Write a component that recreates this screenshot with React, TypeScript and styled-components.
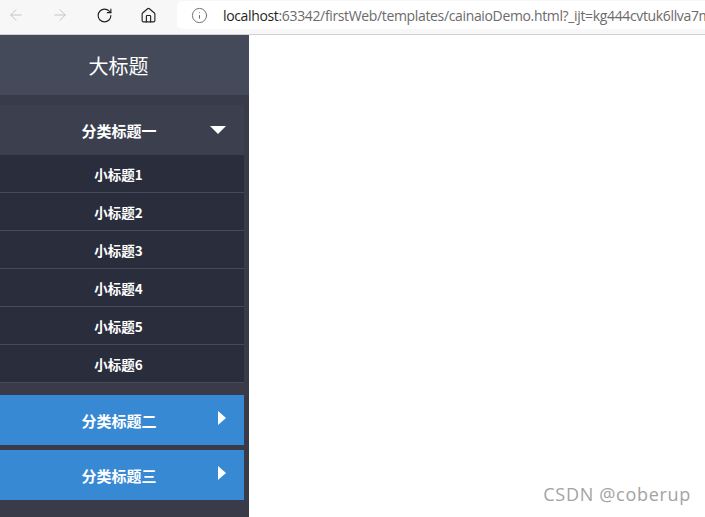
import * as React from 'react';
import styled, { createGlobalStyle } from 'styled-components';
import { ArrowLeft, ArrowRight, RotateCw, Home, Info } from 'lucide-react';

const GlobalStyle = createGlobalStyle`
  html, body {
    margin: 0;
    padding: 0;
    height: 100%;
    overflow: hidden;
  }
  #root {
    height: 100%;
  }
`;

const subItems = ['小标题1', '小标题2', '小标题3', '小标题4', '小标题5', '小标题6'];

function CaretDown() {
  return (
    <svg width="16" height="8" viewBox="0 0 16 8">
      <polygon points="0,0 16,0 8,8" fill="#ffffff" />
    </svg>
  );
}

function CaretRight() {
  return (
    <svg width="8" height="14" viewBox="0 0 8 14">
      <polygon points="0,0 8,7 0,14" fill="#ffffff" />
    </svg>
  );
}

export default function App() {
  return (
    <Page>
      <GlobalStyle />
      <Toolbar>
        <NavButton $disabled>
          <ArrowLeft size={18} strokeWidth={1.3} />
        </NavButton>
        <NavButton $disabled>
          <ArrowRight size={18} strokeWidth={1.3} />
        </NavButton>
        <NavButton>
          <RotateCw size={17} strokeWidth={1.6} />
        </NavButton>
        <NavButton>
          <Home size={17} strokeWidth={1.6} />
        </NavButton>
        <AddressBar>
          <InfoIcon>
            <Info size={17} strokeWidth={1.3} color="#666" />
          </InfoIcon>
          <Url>
            <Host>localhost</Host>:63342/firstWeb/templates/cainaioDemo.html?_ijt=kg444cvtuk6llva7m
          </Url>
        </AddressBar>
      </Toolbar>
      <Body>
        <Sidebar>
          <SideTitle>大标题</SideTitle>
          <Menu>
            <Group>
              <CategoryRow $variant="open">
                <CategoryText>分类标题一</CategoryText>
                <CaretSlot>
                  <CaretDown />
                </CaretSlot>
              </CategoryRow>
              <SubList>
                {subItems.map((s) => (
                  <SubItem key={s}>{s}</SubItem>
                ))}
              </SubList>
            </Group>
            <Group>
              <CategoryRow $variant="closed">
                <CategoryText>分类标题二</CategoryText>
                <CaretSlot $shift={-2}>
                  <CaretRight />
                </CaretSlot>
              </CategoryRow>
            </Group>
            <Group>
              <CategoryRow $variant="closed">
                <CategoryText>分类标题三</CategoryText>
                <CaretSlot $shift={-2}>
                  <CaretRight />
                </CaretSlot>
              </CategoryRow>
            </Group>
          </Menu>
        </Sidebar>
        <Main>
          <Watermark>CSDN @coberup</Watermark>
        </Main>
      </Body>
    </Page>
  );
}

const Page = styled.div`
  display: flex;
  flex-direction: column;
  height: 100vh;
  background: #ffffff;
`;

const Toolbar = styled.div`
  display: flex;
  align-items: flex-start;
  gap: 12px;
  height: 35px;
  box-sizing: border-box;
  padding-top: 1px;
  background: #f7f7f7;
  border-bottom: 1px solid #d2d2d2;
  flex-shrink: 0;
`;

const NavButton = styled.div<{ $disabled?: boolean }>`
  width: 32px;
  height: 28px;
  flex-shrink: 0;
  display: flex;
  align-items: center;
  justify-content: center;
  color: ${(p) => (p.$disabled ? '#c4c4c4' : '#222222')};
`;

const AddressBar = styled.div`
  flex: 1;
  min-width: 0;
  margin-left: 1px;
  height: 28px;
  display: flex;
  align-items: center;
  gap: 15px;
  padding-left: 14px;
  background: #ffffff;
  border-radius: 5px 0 0 5px;
  overflow: hidden;
  white-space: nowrap;
`;

const InfoIcon = styled.span`
  display: flex;
  flex-shrink: 0;
`;

const Url = styled.span`
  font-family: 'Open Sans', 'Noto Sans', sans-serif;
  font-size: 14px;
  color: #6b6b6b;
  letter-spacing: -0.35px;
`;

const Host = styled.span`
  color: #1f1f1f;
`;

const Body = styled.div`
  flex: 1;
  display: flex;
  min-height: 0;
`;

const Sidebar = styled.div`
  width: 249px;
  flex-shrink: 0;
  display: flex;
  flex-direction: column;
  background: #393c48;
  font-family: 'Noto Sans CJK SC', 'Microsoft YaHei', sans-serif;
  color: #ffffff;
`;

const SideTitle = styled.div`
  height: 60px;
  display: flex;
  align-items: center;
  justify-content: center;
  padding-right: 12px;
  background: #454a5a;
  font-size: 20px;
  font-weight: 400;
`;

const Menu = styled.div`
  display: flex;
  flex-direction: column;
  gap: 5px;
  padding: 10px 5px 0 0;
`;

const Group = styled.div`
  display: flex;
  flex-direction: column;
`;

const CategoryRow = styled.div<{ $variant: 'open' | 'closed' }>`
  height: 50px;
  display: grid;
  grid-template-columns: 1fr auto 1fr;
  align-items: center;
  padding: 0 18px 0 12px;
  background: ${(p) => (p.$variant === 'open' ? '#3b3f4e' : '#3789d4')};
`;

const CategoryText = styled.span`
  grid-column: 2;
  font-size: 15px;
  font-weight: 700;
`;

const CaretSlot = styled.span<{ $shift?: number }>`
  grid-column: 3;
  justify-self: end;
  display: flex;
  transform: translateY(${(p) => p.$shift ?? 0}px);
`;

const SubList = styled.div`
  display: flex;
  flex-direction: column;
  margin-bottom: 7px;
`;

const SubItem = styled.div`
  height: 37px;
  display: flex;
  align-items: center;
  justify-content: center;
  padding-right: 7px;
  background: #2a2d3b;
  border-bottom: 1px solid #464a59;
  font-size: 13.5px;
  font-weight: 700;
`;

const Main = styled.div`
  flex: 1;
  position: relative;
  background: #ffffff;
`;

const Watermark = styled.div`
  position: absolute;
  right: 14px;
  bottom: 11px;
  font-family: 'Open Sans', 'Noto Sans', sans-serif;
  font-size: 18px;
  letter-spacing: 0.7px;
  color: #a3a3a3;
`;
